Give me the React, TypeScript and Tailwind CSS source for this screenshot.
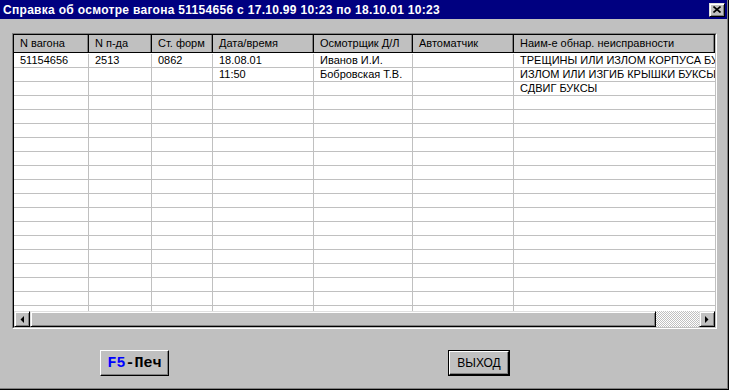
import React from 'react'

const cols = [
  { w: 'w-[75px]', label: 'N вагона' },
  { w: 'w-[63px]', label: 'N п-да' },
  { w: 'w-[61px]', label: 'Ст. форм' },
  { w: 'w-[101px]', label: 'Дата/время' },
  { w: 'w-[99px]', label: 'Осмотрщик Д/Л' },
  { w: 'w-[101px]', label: 'Автоматчик' },
  { w: 'flex-1', label: 'Наим-е обнар. неисправности' },
]

const rows: string[][] = [
  ['51154656', '2513', '0862', '18.08.01', 'Иванов И.И.', '', 'ТРЕЩИНЫ ИЛИ ИЗЛОМ КОРПУСА БУКСЫ'],
  ['', '', '', '11:50', 'Бобровская Т.В.', '', 'ИЗЛОМ ИЛИ ИЗГИБ КРЫШКИ БУКСЫ'],
  ['', '', '', '', '', '', 'СДВИГ БУКСЫ'],
]

const raised =
  'bg-[#c0c0c0] border border-t-[#dfdfdf] border-l-[#dfdfdf] border-r-black border-b-black shadow-[inset_1px_1px_0_#fff,inset_-1px_-1px_0_#808080]'

function Arrow({ dir }: { dir: 'left' | 'right' }) {
  return (
    <svg width="4" height="7" viewBox="0 0 4 7">
      {dir === 'left' ? <path d="M4 0 L4 7 L0.5 3.5 Z" fill="#000" /> : <path d="M0 0 L0 7 L3.5 3.5 Z" fill="#000" />}
    </svg>
  )
}

export default function App() {
  const allRows = Array.from({ length: 20 }, (_, i) => rows[i] ?? ['', '', '', '', '', '', ''])

  return (
    <div className="w-[729px] h-[390px] bg-[#c0c0c0] border-r border-b border-black font-['Liberation_Sans',Arial,sans-serif]">
      <div className="h-full flex flex-col border-r border-b border-[#808080]">
        {/* Title bar */}
        <div className="h-[19px] bg-[#000080] flex items-center justify-between pl-[3px] pr-[2px]">
          <span className="text-white font-bold text-[12px] tracking-[0.3px] leading-none whitespace-nowrap">
            Справка об осмотре вагона 51154656 с 17.10.99 10:23 по 18.10.01 10:23
          </span>
          <div className={`w-[16px] h-[14px] flex items-center justify-center ${raised}`}>
            <svg width="8" height="7" viewBox="0 0 8 7">
              <path d="M0.5 0.5 L7.5 6.5 M7.5 0.5 L0.5 6.5" stroke="#000" strokeWidth="1.6" />
            </svg>
          </div>
        </div>

        {/* Grid */}
        <div className="ml-[12px] mt-[14px] w-[705px] h-[296px] border border-t-[#808080] border-l-[#808080] border-r-white border-b-white">
          <div className="h-full flex flex-col bg-white border border-t-black border-l-black border-r-[#c0c0c0] border-b-[#c0c0c0]">
            <div className="h-[18px] flex bg-[#c0c0c0] border-b border-black">
              {cols.map((c) => (
                <div
                  key={c.label}
                  className={`${c.w} shrink-0 border-r border-r-black shadow-[inset_-1px_0_0_#808080] pl-[6px] text-[11px] leading-[17px] text-black whitespace-nowrap overflow-hidden`}
                >
                  {c.label}
                </div>
              ))}
            </div>

            <div className="flex-1 overflow-hidden pt-[1px]">
              {allRows.map((r, i) => (
                <div key={i} className="h-[14px] flex border-b border-[#c0c0c0]">
                  {cols.map((c, j) => (
                    <div
                      key={j}
                      className={`${c.w} shrink-0 ${j < 6 ? 'border-r border-[#c0c0c0]' : ''} pl-[6px] text-[11px] leading-[13px] text-black whitespace-nowrap overflow-hidden`}
                    >
                      {r[j]}
                    </div>
                  ))}
                </div>
              ))}
            </div>

            {/* Horizontal scrollbar */}
            <div className="h-[16px] flex bg-[#c0c0c0]">
              <div className={`w-[16px] h-[16px] flex items-center justify-center ${raised}`}>
                <Arrow dir="left" />
              </div>
              <div className={`w-[626px] h-[16px] ${raised}`} />
              <div className="flex-1 h-[16px] bg-[repeating-conic-gradient(#c0c0c0_0_25%,#ffffff_0_50%)] bg-[length:2px_2px]" />
              <div className={`w-[16px] h-[16px] flex items-center justify-center ${raised}`}>
                <Arrow dir="right" />
              </div>
            </div>
          </div>
        </div>

        {/* Buttons */}
        <div className="flex mt-[21px] pl-[100px]">
          <div className="w-[69px] h-[26px] flex items-center justify-center bg-[#c0c0c0] border border-t-white border-l-white border-r-black border-b-black shadow-[inset_-1px_-1px_0_#808080]">
            <span className="font-['Liberation_Mono','Courier_New',monospace] font-bold text-[15px] leading-none">
              <span className="text-[#0000ff]">F5</span>
              <span className="text-black">-Печ</span>
            </span>
          </div>
          <div className="ml-[279px] w-[62px] h-[26px] border border-black">
            <div className="h-full flex items-center justify-center bg-[#c0c0c0] border border-t-white border-l-white border-r-black border-b-black shadow-[inset_-1px_-1px_0_#808080]">
              <span className="text-[12px] leading-none text-black">ВЫХОД</span>
            </div>
          </div>
        </div>
      </div>
    </div>
  )
}
